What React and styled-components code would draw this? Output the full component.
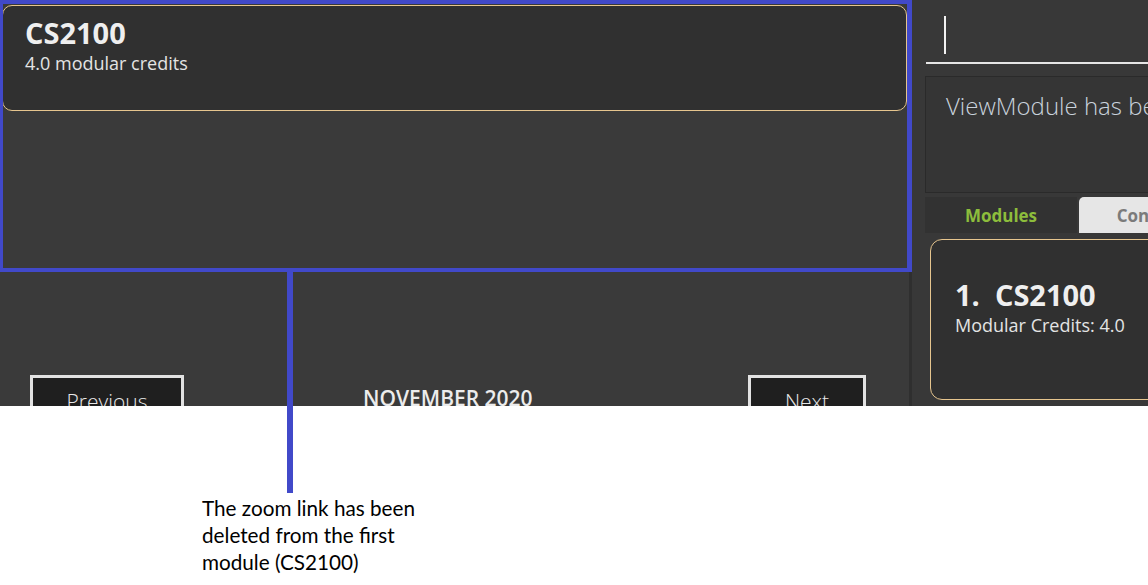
import React from "react";
import styled, { createGlobalStyle } from "styled-components";

const GlobalStyle = createGlobalStyle`
  body {
    margin: 0;
    background: #ffffff;
    font-family: "Open Sans", "Noto Sans", sans-serif;
  }
`;

const Page = styled.div`
  position: relative;
  width: 1148px;
  height: 585px;
  overflow: hidden;
`;

const Screen = styled.div`
  display: flex;
  height: 406px;
  background: #3a3a3a;
  overflow: hidden;
`;

const LeftPanel = styled.div`
  width: 909px;
  flex-shrink: 0;
  display: flex;
  flex-direction: column;
`;

const ListArea = styled.div`
  height: 375px;
  flex-shrink: 0;
  box-sizing: border-box;
  padding: 5px 2px 0 2px;
`;

const ModuleCard = styled.div`
  height: 106px;
  box-sizing: border-box;
  background: #303030;
  border: 1px solid #e6c58e;
  border-radius: 10px;
  padding: 8px 22px;
  color: #efefef;
`;

const CardTitle = styled.div`
  font-size: 29px;
  font-weight: 700;
  line-height: 37px;
`;

const CardSub = styled.div`
  font-size: 18px;
  line-height: 24px;
  color: #e4e4e4;
`;

const Footer = styled.div`
  display: flex;
  flex-shrink: 0;
  align-items: flex-start;
  padding-left: 30px;
  padding-right: 43px;
`;

const NavButton = styled.button`
  width: ${(p) => p.$w}px;
  height: 44px;
  box-sizing: border-box;
  background: #1f1f1f;
  border: 3px solid #e2e2e2;
  color: #e8e8e8;
  font-family: "Open Sans", sans-serif;
  font-size: 21px;
  font-weight: 300;
  padding: 8px 0 0;
  text-align: center;
  margin-left: ${(p) => (p.$push ? "auto" : "0")};
`;

const MonthLabel = styled.div`
  margin-left: 179px;
  padding-top: 11px;
  color: #ececec;
  font-size: 21px;
  font-weight: 600;
  line-height: 25px;
`;

const RightPanel = styled.div`
  flex: 1;
  min-width: 0;
  overflow: hidden;
  border-left: 3px solid #2f2f2f;
  background: #383838;
  padding-left: 13px;
`;

const RightInner = styled.div`
  width: 420px;
`;

const CommandBox = styled.div`
  height: 64px;
  box-sizing: border-box;
  border-bottom: 2px solid #e6e6e6;
  margin-left: 1px;
  padding: 16px 0 0 18px;
`;

const Caret = styled.div`
  width: 2px;
  height: 38px;
  background: #f2f2f2;
`;

const ResultBox = styled.div`
  margin-top: 12px;
  height: 117px;
  box-sizing: border-box;
  border: 1px solid #2a2a2a;
  background: #353535;
  padding: 12px 20px;
  color: #c9d2dc;
  font-size: 24px;
  font-weight: 300;
  white-space: nowrap;
`;

const TabRow = styled.div`
  display: flex;
  gap: 1px;
  margin-top: 4px;
  height: 36px;
`;

const Tab = styled.div`
  width: ${(p) => p.$w}px;
  display: flex;
  align-items: center;
  justify-content: center;
  padding-top: 1px;
  font-size: 17px;
  font-weight: 700;
  background: ${(p) => (p.$active ? "#323232" : "#e6e6e6")};
  color: ${(p) => (p.$active ? "#8dbd3c" : "#7b7b7b")};
  border-radius: ${(p) => (p.$active ? "0" : "5px 5px 0 0")};
  margin-left: ${(p) => (p.$active ? "0" : "1px")};
`;

const SideCard = styled.div`
  margin: 6px 0 0 5px;
  height: 161px;
  box-sizing: border-box;
  border: 1.5px solid #e6c58e;
  border-radius: 12px;
  background: #303030;
  padding: 36px 24px;
  color: #efefef;
`;

const SideTitle = styled.div`
  font-size: 29px;
  font-weight: 700;
  line-height: 37px;
  white-space: pre;
`;

const SideSub = styled.div`
  font-size: 18px;
  line-height: 24px;
  color: #e4e4e4;
`;

const Highlight = styled.div`
  position: absolute;
  left: 0;
  top: 0;
  width: 912px;
  height: 272px;
  box-sizing: border-box;
  border: 4px solid #4149c9;
  border-left-width: 3px;
  border-right-width: 5px;
  pointer-events: none;
`;

const Callout = styled.div`
  position: absolute;
  left: 287px;
  top: 270px;
  width: 6px;
  height: 223px;
  background: #4149c9;
`;

const Caption = styled.div`
  padding: 89px 0 0 202px;
  width: 250px;
  font-family: Lato, "Open Sans", sans-serif;
  font-size: 20.7px;
  line-height: 27px;
  color: #000;
`;

export default function App() {
  return (
    <>
      <GlobalStyle />
      <Page>
        <Screen>
          <LeftPanel>
            <ListArea>
              <ModuleCard>
                <CardTitle>CS2100</CardTitle>
                <CardSub>4.0 modular credits</CardSub>
              </ModuleCard>
            </ListArea>
            <Footer>
              <NavButton $w={154}>Previous</NavButton>
              <MonthLabel>NOVEMBER 2020</MonthLabel>
              <NavButton $w={118} $push>
                Next
              </NavButton>
            </Footer>
          </LeftPanel>
          <RightPanel>
            <RightInner>
              <CommandBox>
                <Caret />
              </CommandBox>
              <ResultBox>ViewModule has been deleted</ResultBox>
              <TabRow>
                <Tab $active $w={152}>
                  Modules
                </Tab>
                <Tab $w={150}>Contacts</Tab>
              </TabRow>
              <SideCard>
                <SideTitle>1.  CS2100</SideTitle>
                <SideSub>Modular Credits: 4.0</SideSub>
              </SideCard>
            </RightInner>
          </RightPanel>
        </Screen>
        <Highlight />
        <Callout />
        <Caption>
          The zoom link has been deleted from the first module (CS2100)
        </Caption>
      </Page>
    </>
  );
}
